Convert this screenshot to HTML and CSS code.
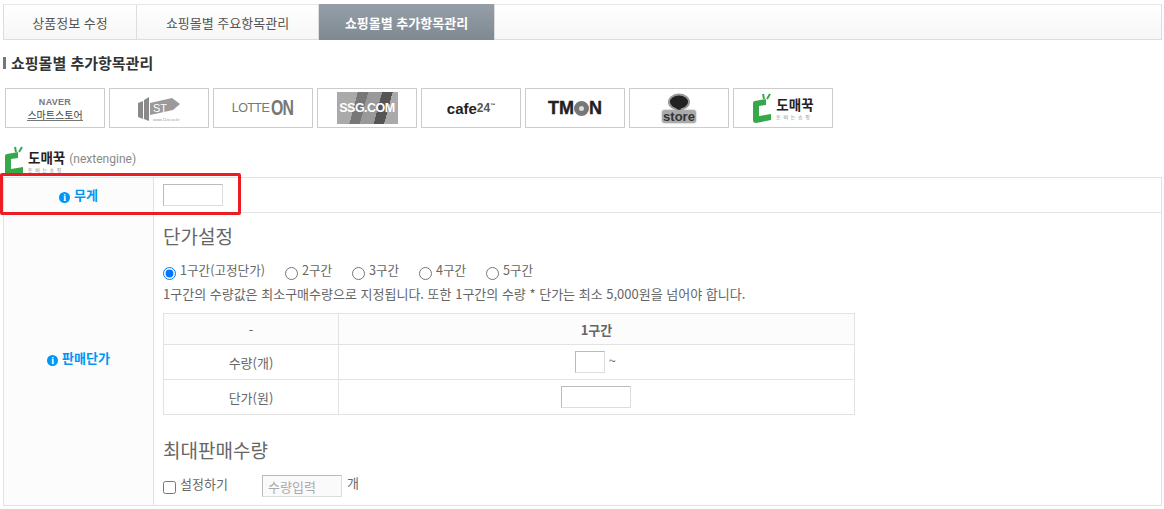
FILE: index.html
```html
<!DOCTYPE html>
<html lang="ko">
<head>
<meta charset="UTF-8">
<title>쇼핑몰별 추가항목관리</title>
<link rel="stylesheet" href="styles.css">
</head>
<body>
  <div class="tabs">
    <a class="tab tab-first">상품정보 수정</a>
    <a class="tab tab-second">쇼핑몰별 주요항목관리</a>
    <a class="tab tab-third active">쇼핑몰별 추가항목관리</a>
  </div>

  <h2 class="section-title">쇼핑몰별 추가항목관리</h2>

  <div class="malls">
    <div class="mall naver"><b>NAVER</b><span>스마트스토어</span></div>
    <div class="mall st">
      <svg width="42" height="24" viewBox="0 0 42 24"><path d="M0 6l5-2v18l-5-2zM6 3l5-3v24l-5-2z" fill="#8a8a8a"/><path d="M12 6l22-5 8 6-7 6-23 5z" fill="#9a9a9a"/></svg>
      <span class="st-label">ST</span>
      <span class="st-url">www.11st.co.kr</span>
    </div>
    <div class="mall lotte"><span>LOTTE</span><b>ON</b></div>
    <div class="mall ssg"><div class="ssg-box">SSG.COM</div></div>
    <div class="mall cafe">cafe<i>24</i><sup>™</sup></div>
    <div class="mall tmon">TM<span class="tmon-o"></span>N</div>
    <div class="mall store">
      <svg width="24" height="20" viewBox="0 0 24 20"><ellipse cx="12" cy="9" rx="10" ry="7.5" fill="#222" stroke="#999" stroke-width="2"/><path d="M9 15l4 4 1-4z" fill="#222"/></svg>
      <span class="store-label">store</span>
    </div>
    <div class="mall dome">
      <svg class="dome-icon" width="20" height="31" viewBox="0 0 20 31"><path d="M1 10q0-2 2-2l11-2v6l-7 1v10l12-2v6L4 30q-3 0-3-3z" fill="#35a84a"/><path d="M11 1l1 5M18 1l-3 5" stroke="#35a84a" stroke-width="2" fill="none"/></svg>
      <div class="dome-text"><b>도매꾹</b><span>돈 버 는 쇼 핑</span></div>
    </div>
  </div>

  <div class="mall-head">
    <svg class="dome-icon" width="20" height="31" viewBox="0 0 20 31"><path d="M1 10q0-2 2-2l11-2v6l-7 1v10l12-2v6L4 30q-3 0-3-3z" fill="#35a84a"/><path d="M11 1l1 5M18 1l-3 5" stroke="#35a84a" stroke-width="2" fill="none"/></svg>
    <div class="dome-text"><b>도매꾹</b><span>돈 버 는 쇼 핑</span></div>
    <span class="mall-code">(nextengine)</span>
  </div>

  <div class="form-wrap">
    <div class="highlight"></div>
    <table class="form-table">
      <tr class="row-weight">
        <th><span class="info">i</span>무게</th>
        <td><input type="text" class="input-weight"></td>
      </tr>
      <tr>
        <th class="th-price"><span class="info">i</span>판매단가</th>
        <td class="price-cell">
          <h3 class="sub-title">단가설정</h3>
          <div class="radios">
            <label class="radio radio-one"><input type="radio" name="range" checked><span>1구간(고정단가)</span></label>
            <label class="radio"><input type="radio" name="range"><span>2구간</span></label>
            <label class="radio"><input type="radio" name="range"><span>3구간</span></label>
            <label class="radio"><input type="radio" name="range"><span>4구간</span></label>
            <label class="radio"><input type="radio" name="range"><span>5구간</span></label>
          </div>
          <p class="notice">1구간의 수량값은 최소구매수량으로 지정됩니다. 또한 1구간의 수량 * 단가는 최소 5,000원을 넘어야 합니다.</p>
          <table class="price-table">
            <tr class="price-head">
              <th>-</th>
              <th class="strong">1구간</th>
            </tr>
            <tr>
              <td>수량(개)</td>
              <td class="price-value"><input type="text" class="input-qty"> ~</td>
            </tr>
            <tr>
              <td>단가(원)</td>
              <td class="price-value"><input type="text" class="input-price"></td>
            </tr>
          </table>
          <h3 class="sub-title max-title">최대판매수량</h3>
          <div class="max-row">
            <label class="check"><input type="checkbox"><span>설정하기</span></label>
            <input type="text" class="input-max" placeholder="수량입력" disabled>
            <span class="unit">개</span>
          </div>
        </td>
      </tr>
    </table>
  </div>
</body>
</html>
```

FILE: styles.css
```css
body {
  margin: 0;
  padding: 4px 2px 0 3px;
  font-family: "Noto Sans CJK KR", "Noto Sans", sans-serif;
  font-size: 13px;
  color: #555;
  background-color: #fff;
  overflow: hidden;
}
.tabs {
  display: flex;
  height: 36px;
  border: 1px solid #ddd;
  border-top-color: #e6e6e6;
  box-sizing: border-box;
  background: linear-gradient(#fff, #f6f6f6);
}
.tab {
  display: flex;
  align-items: center;
  justify-content: center;
  border-right: 1px solid #ddd;
  color: #555;
}
.tab-first { width: 132px; }
.tab-second { width: 181px; }
.tab-third { width: 175px; margin-top: -1px; margin-bottom: -1px; }
.tab.active {
  background: linear-gradient(#969fa7, #7e8992);
  color: #fff;
  font-weight: 700;
}
.section-title {
  margin: 13px 0 0;
  padding-left: 8px;
  height: 19px;
  line-height: 19px;
  font-size: 15px;
  font-weight: 700;
  color: #333;
  position: relative;
}
.section-title::before {
  content: "";
  position: absolute;
  left: 0;
  top: 4px;
  width: 3px;
  height: 12px;
  background-color: #777;
}
.malls {
  display: flex;
  gap: 4px;
  margin: 16px 0 0 2px;
}
.mall {
  width: 100px;
  height: 40px;
  box-sizing: border-box;
  border: 1px solid #ccc;
  display: flex;
  align-items: center;
  justify-content: center;
  position: relative;
  overflow: hidden;
}
.naver {
  flex-direction: column;
  font-size: 10px;
  line-height: 13px;
  color: #444;
}
.naver b {
  font-family: "Liberation Sans", sans-serif;
  font-size: 9px;
  font-weight: 700;
  letter-spacing: 0.3px;
  color: #777;
}
.naver span { border-bottom: 1px solid #777; line-height: 11px; }
.st svg { margin-top: 2px; }
.st-label {
  position: absolute;
  left: 43px;
  top: 13px;
  font-family: "Liberation Sans", sans-serif;
  font-size: 11px;
  color: #fff;
}
.st-url {
  position: absolute;
  left: 43px;
  top: 28px;
  font-family: "Liberation Sans", sans-serif;
  font-size: 4px;
  line-height: 5px;
  color: #999;
}
.lotte { font-family: "Liberation Sans", sans-serif; color: #777; }
.lotte span { font-size: 12.5px; letter-spacing: -0.6px; }
.lotte b {
  display: inline-block;
  width: 23px;
  font-size: 22px;
  letter-spacing: -1px;
  transform: scaleX(0.72);
  transform-origin: left center;
  margin-left: 2px;
}
.ssg-box {
  width: 61px;
  height: 32px;
  display: flex;
  align-items: center;
  justify-content: center;
  background: linear-gradient(105deg, #aaa 0 30%, #777 30% 45%, #999 45% 65%, #555 65% 80%, #aaa 80%);
  font-family: "Liberation Sans", sans-serif;
  font-size: 12.5px;
  font-weight: 700;
  letter-spacing: -0.5px;
  color: #fff;
}
.cafe {
  font-family: "Liberation Sans", sans-serif;
  font-size: 15px;
  font-weight: 700;
  color: #222;
}
.cafe i { font-style: normal; font-size: 12px; color: #555; }
.cafe sup { font-size: 5px; margin-bottom: 7px; }
.tmon {
  font-family: "Liberation Sans", sans-serif;
  font-size: 18px;
  font-weight: 700;
  color: #222;
  -webkit-text-stroke: 0.4px #222;
}
.tmon-o {
  width: 15px;
  height: 15px;
  box-sizing: border-box;
  border-radius: 50%;
  border: 5px solid #777;
  background-color: #ddd;
}
.store { flex-direction: column; }
.store svg { margin-bottom: -3px; }
.store-label {
  font-family: "Liberation Sans", sans-serif;
  font-size: 13px;
  font-weight: 700;
  line-height: 13px;
  padding: 0 1px;
  color: #333;
  background-color: #aaa;
  border-radius: 3px;
  box-shadow: 0 0 2px #999;
}
.dome-icon { display: block; flex: none; }
.dome-text { display: flex; flex-direction: column; margin-left: 4px; }
.dome-text b {
  font-size: 13.5px;
  line-height: 17px;
  font-weight: 700;
  color: #222;
}
.dome-text span {
  font-size: 5px;
  line-height: 8px;
  letter-spacing: 0.6px;
  white-space: nowrap;
  color: #888;
}
.mall-head {
  display: flex;
  align-items: center;
  height: 31px;
  margin-top: 18px;
  padding-left: 1px;
}
.mall-code {
  margin-left: 4px;
  margin-bottom: 6px;
  font-size: 12px;
  color: #888;
  font-family: "Roboto", sans-serif;
}
.form-wrap { position: relative; }
.highlight {
  position: absolute;
  left: -3px;
  top: -4px;
  width: 235px;
  height: 36px;
  border: 3px solid #ed1c24;
  border-radius: 2px;
  pointer-events: none;
}
.form-table {
  width: 100%;
  border-collapse: collapse;
  border: 1px solid #e2e2e2;
  table-layout: fixed;
}
.form-table > tbody > tr > th {
  width: 150px;
  box-sizing: border-box;
  padding: 0 0 2px;
  background-color: #fcfcfc;
  border: 1px solid #e2e2e2;
  color: #0096f5;
  font-size: 13px;
  font-weight: 700;
}
.form-table > tbody > tr > th.th-price { padding-bottom: 4px; }
.form-table > tbody > tr > td {
  border: 1px solid #e2e2e2;
  padding: 0 9px;
}
.row-weight { height: 35px; }
.info {
  display: inline-block;
  width: 11px;
  height: 11px;
  line-height: 11px;
  margin-right: 4px;
  border-radius: 50%;
  background-color: #0096f5;
  color: #fff;
  font-family: "Liberation Serif", serif;
  font-size: 10px;
  font-weight: 700;
  text-align: center;
  vertical-align: -1px;
}
input[type="text"] {
  box-sizing: border-box;
  border: 1px solid #bbb;
  border-right-color: #ddd;
  border-bottom-color: #ddd;
  margin: 0;
  padding: 0 5px;
  vertical-align: middle;
  font-family: inherit;
  font-size: 13px;
}
.input-weight { display: block; width: 60px; height: 22px; }
.form-table > tbody > tr > td.price-cell {
  padding-top: 9px;
  padding-bottom: 0;
  height: 283px;
  vertical-align: top;
}
.sub-title {
  margin: 0;
  font-size: 19px;
  font-weight: 400;
  line-height: 28px;
  color: #666;
}
.radios { display: flex; margin-top: 13px; height: 22px; }
.radio { display: flex; width: 67px; }
.radio-one { width: 122px; }
.radio input, .check input {
  width: 13px;
  height: 13px;
  margin: 4px 4px 0 0;
  flex: none;
}
.radio span { font-size: 12.6px; line-height: 14px; color: #666; }
.check span { line-height: 16px; color: #666; padding-top: 1px; }
.notice {
  margin: 0;
  line-height: 18px;
  color: #666;
}
.price-table {
  width: 692px;
  margin-top: 10px;
  border-collapse: collapse;
  table-layout: fixed;
}
.price-table th, .price-table td {
  border: 1px solid #e2e2e2;
  text-align: center;
  font-weight: 400;
  color: #666;
  height: 34px;
  padding: 0;
}
.price-table th:first-child, .price-table td:first-child { width: 174px; }
.price-head th { background-color: #fcfcfc; height: 30px; }
.price-table .strong { font-weight: 700; }
.price-table .price-value { padding-right: 2px; }
.input-qty { width: 30px; height: 22px; }
.input-price { width: 70px; height: 22px; }
.max-title { margin-top: 21px; }
.max-row { display: flex; margin-top: 11px; height: 24px; }
.check { display: flex; width: 99px; }
.check input { margin-top: 6px; }
.input-max {
  width: 80px;
  height: 22px;
  background-color: #fafafa;
  color: #aaa;
}
.input-max::placeholder { color: #aaa; }
.unit { margin-left: 5px; line-height: 16px; color: #666; }
```
